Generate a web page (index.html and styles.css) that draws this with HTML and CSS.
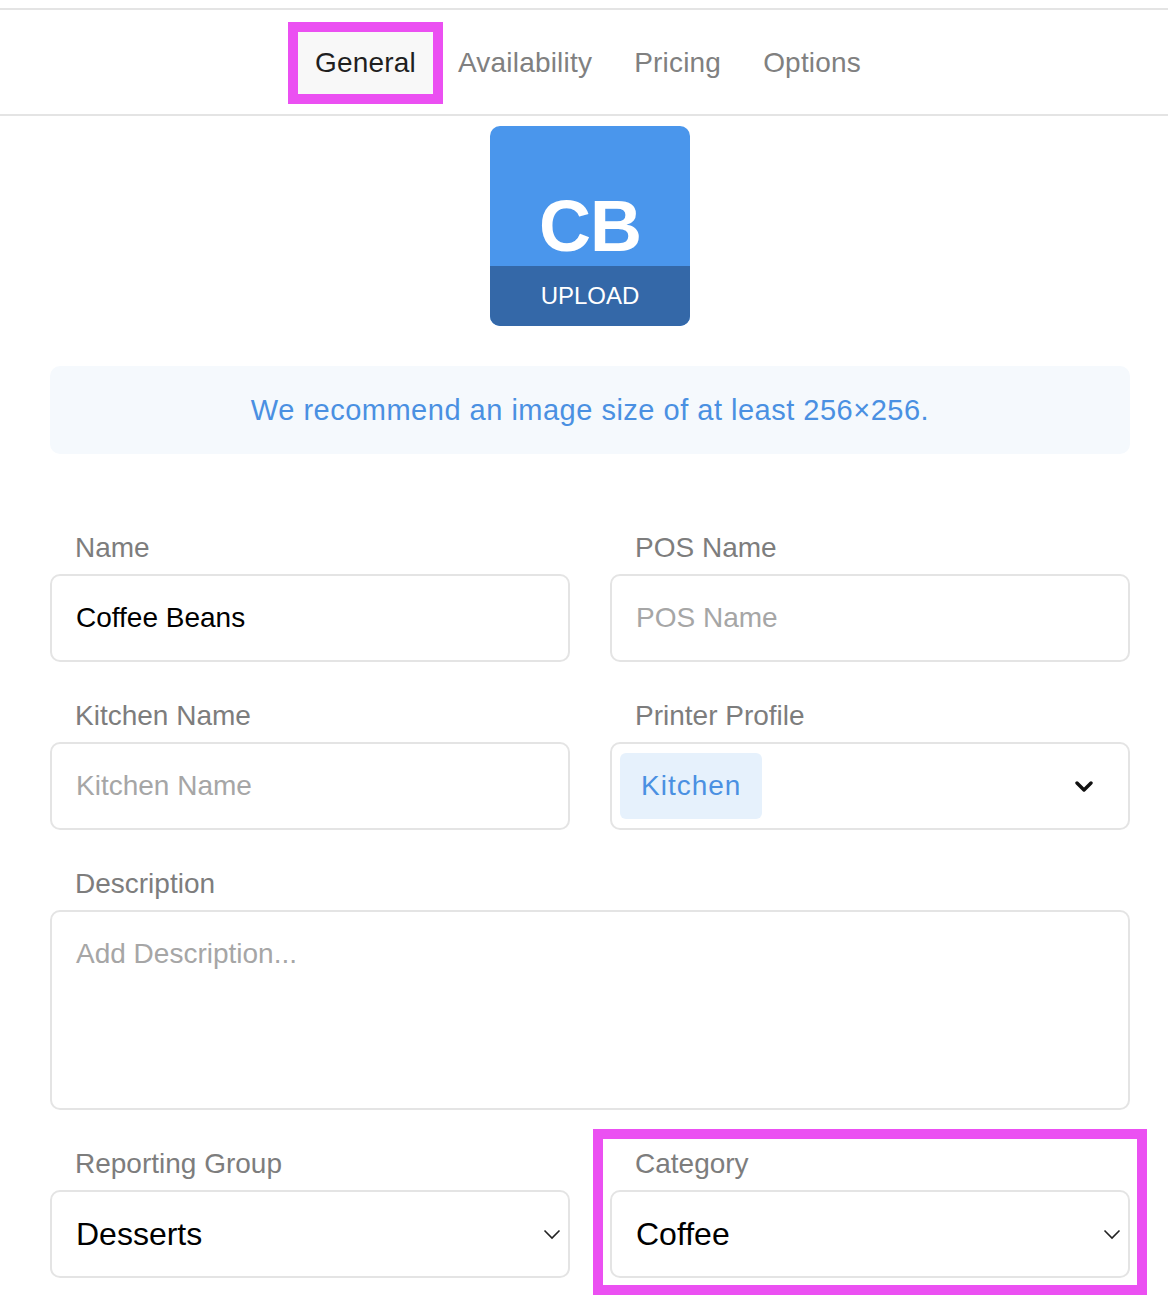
FILE: index.html
```html
<!DOCTYPE html>
<html lang="en">
<head>
  <meta charset="UTF-8">
  <title>Edit Item</title>
  <link rel="stylesheet" href="styles.css">
</head>
<body>

  <!-- Tabs -->
  <nav class="tabs-bar">
    <div class="tab active">General</div>
    <div class="tab">Availability</div>
    <div class="tab">Pricing</div>
    <div class="tab">Options</div>
  </nav>

  <main class="content">
    <!-- Image -->
    <div class="upload-tile">
      <span class="initials">CB</span>
      <div class="upload-band">UPLOAD</div>
    </div>

    <div class="notice">We recommend an image size of at least 256×256.</div>

    <!-- Form -->
    <form class="form">
      <div class="field">
        <label>Name</label>
        <input class="input" type="text" value="Coffee Beans" placeholder="Name">
      </div>
      <div class="field">
        <label>POS Name</label>
        <input class="input" type="text" placeholder="POS Name">
      </div>

      <div class="field">
        <label>Kitchen Name</label>
        <input class="input" type="text" placeholder="Kitchen Name">
      </div>
      <div class="field">
        <label>Printer Profile</label>
        <div class="input multi-select">
          <span class="chip">Kitchen</span>
          <svg class="chevron-bold" width="18" height="11" viewBox="0 0 18 11">
            <path d="M2 2 L9 9 L16 2" fill="none" stroke="#111" stroke-width="3.4" stroke-linecap="round" stroke-linejoin="round"/>
          </svg>
        </div>
      </div>

      <div class="field wide">
        <label>Description</label>
        <textarea class="input textarea" placeholder="Add Description..."></textarea>
      </div>

      <div class="field">
        <label>Reporting Group</label>
        <div class="input select">
          <span>Desserts</span>
          <svg width="18" height="11" viewBox="0 0 18 11">
            <path d="M1.5 1.5 L9 9 L16.5 1.5" fill="none" stroke="#222" stroke-width="1.6"/>
          </svg>
        </div>
      </div>
      <div class="field highlight">
        <label>Category</label>
        <div class="input select">
          <span>Coffee</span>
          <svg width="18" height="11" viewBox="0 0 18 11">
            <path d="M1.5 1.5 L9 9 L16.5 1.5" fill="none" stroke="#222" stroke-width="1.6"/>
          </svg>
        </div>
      </div>
    </form>
  </main>

</body>
</html>
```

FILE: styles.css
```css
html, body {
  margin: 0;
  padding: 0;
  background: white;
  font-family: "Liberation Sans", Arial, sans-serif;
}

body {
  padding-top: 8px;
}

/* Tabs */
.tabs-bar {
  display: flex;
  justify-content: center;
  gap: 8px;
  padding: 22px 38px 20px 46px;
  border-top: 2px solid #e4e4e4;
  border-bottom: 2px solid #e4e4e4;
}

.tab {
  display: flex;
  align-items: center;
  height: 62px;
  padding: 0 17px;
  font-size: 28px;
  letter-spacing: 0.2px;
  color: #808080;
}

.tab.active {
  background: #f8f8f8;
  color: #1f1f1f;
  outline: 10px solid #eb50f2;
}

/* Content */
.content {
  padding: 10px 38px 40px 50px;
}

.upload-tile {
  position: relative;
  width: 200px;
  height: 200px;
  margin: 0 auto;
  border-radius: 10px;
  overflow: hidden;
  background: #4a96ec;
  display: flex;
  align-items: center;
  justify-content: center;
}

.initials {
  color: white;
  font-size: 72px;
  font-weight: bold;
  letter-spacing: -1px;
}

.upload-band {
  position: absolute;
  left: 0;
  right: 0;
  bottom: 0;
  height: 60px;
  background: #3468a8;
  color: white;
  font-size: 24px;
  display: flex;
  align-items: center;
  justify-content: center;
}

.notice {
  margin-top: 40px;
  height: 88px;
  border-radius: 10px;
  background: #f5f9fd;
  color: #4a90e2;
  font-size: 29px;
  letter-spacing: 0.5px;
  display: flex;
  align-items: center;
  justify-content: center;
}

/* Form */
.form {
  margin-top: 76px;
  display: grid;
  grid-template-columns: 1fr 1fr;
  column-gap: 40px;
  row-gap: 36px;
}

.field label {
  display: block;
  padding-left: 25px;
  margin-bottom: 8px;
  line-height: 36px;
  font-size: 28px;
  color: #7d7d7d;
}

.field.wide {
  grid-column: 1 / -1;
}

.field.highlight {
  outline: 10px solid #eb50f2;
  outline-offset: 7px;
}

.input {
  box-sizing: border-box;
  width: 100%;
  height: 88px;
  margin: 0;
  padding: 0 24px;
  border: 2px solid #e4e4e4;
  border-radius: 10px;
  background: white;
  font-family: inherit;
  font-size: 28px;
  color: #000;
  outline: none;
}

.input::placeholder {
  color: #a6a6a6;
}

.textarea {
  display: block;
  height: 200px;
  padding: 24px;
  line-height: 36px;
  resize: none;
}

.select {
  display: flex;
  align-items: center;
  justify-content: space-between;
  padding: 0 7px 0 24px;
  font-size: 32px;
}

.multi-select {
  display: flex;
  align-items: center;
  justify-content: space-between;
  padding: 0 35px 0 8px;
}

.chip {
  display: flex;
  align-items: center;
  height: 66px;
  padding: 0 21px;
  border-radius: 6px;
  background: #e6f1fc;
  color: #4a90e2;
  font-size: 28px;
  letter-spacing: 1px;
}
```
